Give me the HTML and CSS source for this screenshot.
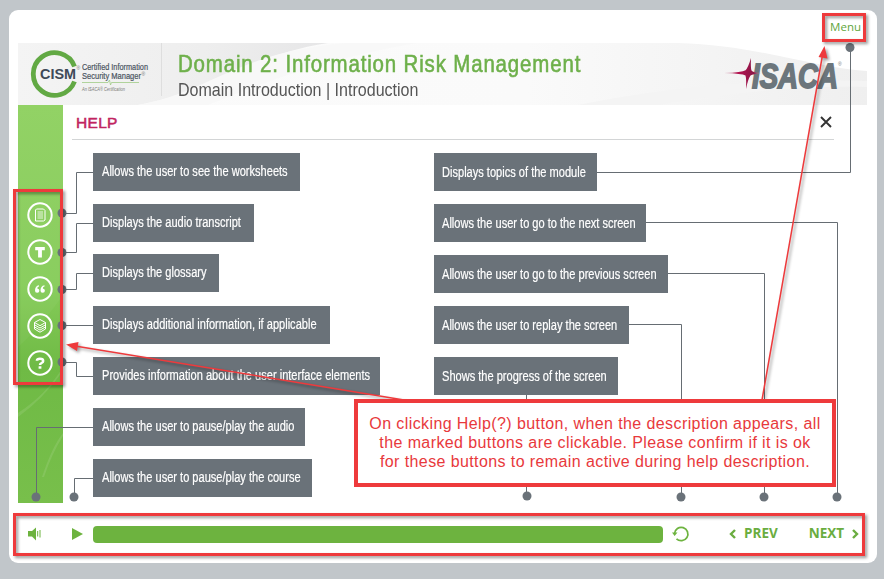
FILE: index.html
```html
<!DOCTYPE html>
<html lang="en">
<head>
<meta charset="utf-8">
<title>Domain 2: Information Risk Management</title>
<link rel="stylesheet" href="styles.css">
</head>
<body>
<main class="player">
  <nav class="topbar"><a class="menu">Menu</a></nav>

  <header class="banner">
    <svg class="swoosh" viewBox="0 0 849 62" preserveAspectRatio="none" aria-hidden="true">
      <defs>
        <linearGradient id="g1" x1="0" x2="1" y1="0" y2="0"><stop offset="0" stop-color="#f4f4f4"/><stop offset=".6" stop-color="#eeeeee"/><stop offset="1" stop-color="#e6e6e7"/></linearGradient>
        <linearGradient id="g3" x1="0" x2="1" y1="0" y2="0"><stop offset="0" stop-color="#fbfbfb"/><stop offset=".6" stop-color="#fafafa"/><stop offset="1" stop-color="#efefef"/></linearGradient>
      </defs>
      <rect width="849" height="62" fill="url(#g3)"/>
      <path d="M0 0H310C230 12 190 50 120 62H0Z" fill="url(#g1)"/>
      <path d="M120 62C190 50 220 8 330 0H400C300 16 220 50 190 62Z" fill="#f8f8f8"/>
      <path d="M660 0C740 2 800 26 849 28V0Z" fill="#fff"/>
      <path d="M560 62C640 46 740 34 849 38V44C770 42 700 52 640 62Z" fill="#f4f4f4"/>
    </svg>
    <svg class="cism" viewBox="0 0 130 50" role="img" aria-label="CISM">
      <path d="M44.500 17.500A21.300 21.300 0 1 0 44.500 32.500" fill="none" stroke="#62a944" stroke-width="4.800"/>
      <text x="10" y="29.500" class="cism-name" textLength="36" lengthAdjust="spacingAndGlyphs">CISM</text>
      <text x="46.500" y="21" class="reg">®</text>
      <text x="52" y="20.500" class="cism-line" textLength="66" lengthAdjust="spacingAndGlyphs">Certified Information</text>
      <text x="52" y="29.500" class="cism-line" textLength="59" lengthAdjust="spacingAndGlyphs">Security Manager</text>
      <text x="111.500" y="27" class="reg">®</text>
      <path d="M52 33.500H78L79.500 31L80.500 36L81.500 33.500H109" fill="none" stroke="#9fcb87" stroke-width=".8"/>
      <text x="52" y="42" class="cism-small" textLength="43" lengthAdjust="spacingAndGlyphs">An ISACA® Certification</text>
    </svg>
    <div class="titles">
      <h1>Domain 2: Information Risk Management</h1>
      <h2>Domain Introduction | Introduction</h2>
    </div>
    <svg class="isaca" viewBox="0 0 120 36" role="img" aria-label="ISACA">
      <defs><linearGradient id="star" x1="0" x2="1"><stop offset="0" stop-color="#c06a8c"/><stop offset=".4" stop-color="#b3124f"/><stop offset=".8" stop-color="#8c1647"/><stop offset="1" stop-color="#c9a0b2"/></linearGradient></defs>
      <text x="28" y="30.500" class="isaca-name" textLength="86" lengthAdjust="spacingAndGlyphs">ISACA</text>
      <text x="114" y="9" class="reg">®</text>
      <path d="M0 16Q18 15.500 21.500 13.200Q24 11 27 1Q26.500 11 27.500 13.500Q29 15.500 37 16Q29 17 26.500 18.500Q24 22 22 32Q22.500 22 21.500 18.500Q18 16.500 0 16Z" fill="url(#star)"/>
    </svg>
  </header>

  <div class="body">
    <aside class="sidebar">
      <svg class="shine" viewBox="0 0 45 398" preserveAspectRatio="none" aria-hidden="true">
        <path d="M0 242C22 222 38 200 45 190V0H0Z" fill="#fff" opacity=".04"/>
        <path d="M0 308Q28 290 45 262V266Q25 294 0 312Z" fill="#fff" opacity=".1"/>
        <path d="M24 372Q34 342 45 328V331Q34 348 26 372Z" fill="#fff" opacity=".1"/>
      </svg>
      <button><svg viewBox="0 0 26 26"><circle cx="13" cy="13" r="11.700"/><path d="M8.500 8V19H16.500L18 18V8.500L16.500 7H9.500Z"/><path d="M10.500 10H16M10.500 12H16M10.500 14H16M10.500 16H16" class="thin"/></svg></button>
      <button><svg viewBox="0 0 26 26"><circle cx="13" cy="13" r="11.700"/><path d="M8.200 8H17.800V11.300H14.900V18.500H11.100V11.300H8.200Z" class="solid"/></svg></button>
      <button><svg viewBox="0 0 26 26"><circle cx="13" cy="13" r="11.700"/><path d="M12 9.300Q8 10 8 14.500A2.200 2.200 0 1 0 10.300 12.400Q10.300 10.800 12 10.500ZM17.500 9.300Q13.500 10 13.500 14.500A2.200 2.200 0 1 0 15.800 12.400Q15.800 10.800 17.500 10.500Z" class="solid"/></svg></button>
      <button><svg viewBox="0 0 26 26"><circle cx="13" cy="13" r="11.700"/><path d="M13 6.500L18.500 9.500L13 12.700L7.500 9.500ZM7.500 11.800L13 15L18.500 11.800M7.500 13.900L13 17.100L18.500 13.900M7.500 16L13 19.200L18.500 16M7.500 9.500V16M18.500 9.500V16"/></svg></button>
      <button><svg viewBox="0 0 26 26"><circle cx="13" cy="13" r="11.700"/><path d="M9.900 10.800Q10 8.800 13 8.800Q16.200 8.800 16.200 11Q16.200 12.200 14.600 13Q13 13.800 13 15" class="mark"/><rect x="11.600" y="16.300" width="2.800" height="2.400" class="solid"/></svg></button>
    </aside>

    <section class="help">
      <div class="help-head">
        <h3>HELP</h3>
        <svg class="close" viewBox="0 0 12 12"><path d="M1 1L11 11M11 1L1 11"/></svg>
      </div>
      <div class="columns">
        <ul class="left">
          <li class="w1"><span>Allows the user to see the worksheets</span></li>
          <li class="w2"><span>Displays the audio transcript</span></li>
          <li class="w3"><span>Displays the glossary</span></li>
          <li class="w4"><span>Displays additional information, if applicable</span></li>
          <li class="w5"><span>Provides information about the user interface elements</span></li>
          <li class="w6"><span>Allows the user to pause/play the audio</span></li>
          <li class="w7"><span>Allows the user to pause/play the course</span></li>
        </ul>
        <ul class="right">
          <li class="w8"><span>Displays topics of the module</span></li>
          <li class="w9"><span>Allows the user to go to the next screen</span></li>
          <li class="w10"><span>Allows the user to go to the previous screen</span></li>
          <li class="w11"><span>Allows the user to replay the screen</span></li>
          <li class="w12"><span>Shows the progress of the screen</span></li>
        </ul>
      </div>
    </section>
  </div>

  <footer class="controls">
    <svg class="volume" viewBox="0 0 13 14"><path d="M0 4H4L8 .5V13.500L4 9.500H0Z"/><path d="M9.700 4V9.500M12 3V10.500" class="wave"/></svg>
    <svg class="play" viewBox="0 0 11 12"><path d="M0 0L11 6L0 12Z"/></svg>
    <div class="progress"></div>
    <svg class="replay" viewBox="0 0 17 16"><path d="M4.500 12.800A6.700 6.700 0 1 0 2.500 7.500" class="ring"/><path d="M0 6.500H5.500L2.600 10Z"/></svg>
    <a class="prev"><svg viewBox="0 0 7 10"><path d="M6 1L2 5L6 9"/></svg>PREV</a>
    <a class="next">NEXT<svg viewBox="0 0 7 10"><path d="M1 1L5 5L1 9"/></svg></a>
  </footer>
</main>

<svg class="connectors" viewBox="0 0 884 579" aria-hidden="true">
  <g class="wires">
    <path d="M62 213.500H76.500V172.500H93M62 252.500H76.500V223.500H93M62 289.500H76.500V273.500H93M62 325.500H93M62 362.500H76.500V376.500H93M36.500 497V427.500H93M74.500 497V478.500H93"/>
    <path d="M597 172.500H850.500V48M646 222.500H837.500V497M668 273.500H764.500V497M629 324.500H681.500V497M526.500 395V496"/>
  </g>
  <g class="dots">
    <circle cx="62" cy="213" r="4.500"/><circle cx="62" cy="252.500" r="4.500"/><circle cx="62" cy="289.500" r="4.500"/><circle cx="62" cy="325.500" r="4.500"/><circle cx="62" cy="362" r="4.500"/>
    <circle cx="36" cy="497" r="4.500"/><circle cx="74" cy="497" r="4.500"/><circle cx="850" cy="47.500" r="4.500"/><circle cx="837" cy="497" r="4.500"/><circle cx="764" cy="497" r="4.500"/><circle cx="681" cy="497" r="4.500"/><circle cx="527" cy="496" r="4.500"/>
  </g>
</svg>
<svg class="marks" viewBox="0 0 884 579" aria-hidden="true">
  <g class="frames">
    <rect x="823.500" y="14.500" width="41" height="26"/>
    <rect x="14.500" y="190.500" width="47" height="193"/>
    <rect x="14.500" y="514.500" width="849" height="40"/>
  </g>
  <path d="M762 400L822.500 55M404 400L75 346" class="shaft"/>
  <path d="M824.500 46L827.500 58.500L818.500 57ZM66 344.500L78.500 342L77 351Z" class="head"/>
</svg>
<div class="note">
  <p>On clicking Help(?) button, when the description appears, all</p>
  <p>the marked buttons are clickable. Please confirm if it is ok</p>
  <p>for these buttons to remain active during help description.</p>
</div>
</body>
</html>
```
FILE: styles.css
```css
* { box-sizing: border-box; margin: 0; padding: 0; }
body {
  width: 884px; height: 579px; overflow: hidden; position: relative;
  padding: 10px 7px 16px 9px;
  background: #c1c6ca;
  font-family: "Liberation Sans", sans-serif;
}
svg { display: block; overflow: visible; }
.player {
  height: 553px; padding: 0 10px 0 9px;
  display: flex; flex-direction: column;
  background: #fff; border-radius: 9px;
}
.topbar { height: 33px; display: flex; justify-content: flex-end; padding: 8px 6px 0 0; }
.menu { font: 11.500px/18px "Open Sans", sans-serif; color: #5fa53c; }

.banner { height: 62px; display: flex; position: relative; }
.swoosh { position: absolute; left: 0; top: 0; width: 849px; height: 62px; }
.cism { position: relative; width: 130px; height: 50px; margin: 6px 0 0 12px; }
.cism-name { font: bold 14.500px "Liberation Sans", sans-serif; fill: #3f4a58; }
.cism-line { font: 9px "Liberation Sans", sans-serif; fill: #4a545f; stroke: #4a545f; stroke-width: .2; }
.cism-small { font: italic 4.500px "Liberation Sans", sans-serif; fill: #777; }
.reg { font: 5px "Liberation Sans", sans-serif; fill: #777; }
.titles { position: relative; width: 430px; margin-left: 1px; padding: 8px 0 0 16px; border-left: 1px solid #dedede; height: 53px; }
/* condensed lettering */
h1, h2, li span { display: block; width: max-content; white-space: nowrap; font-weight: normal; transform-origin: 0 50%; }
h1 { font-size: 24px; line-height: 26px; letter-spacing: 1px; color: #6eb04b; -webkit-text-stroke: .6px #6eb04b; transform: scaleX(.852); }
h2 { font-size: 18.500px; line-height: 26px; color: #555; transform: scaleX(.867); }
.isaca { position: relative; width: 120px; height: 36px; margin: 14px 0 0 133px; }
.isaca-name { font: italic bold 35px "Liberation Sans", sans-serif; fill: #6c767c; stroke: #6c767c; stroke-width: 1.800; }

.body { height: 398px; display: flex; }
.sidebar {
  width: 45px; padding: 97px 1px 0 0; position: relative;
  display: flex; flex-direction: column; align-items: center; gap: 11px;
  background: linear-gradient(#8ed15f 0, #86cc59 45%, #6fba45 66%, #78bf4b 100%);
}
.shine { position: absolute; inset: 0; width: 45px; height: 398px; }
.sidebar button { position: relative; width: 26px; height: 26px; border: 0; background: none; }
.sidebar button svg { width: 26px; height: 26px; fill: none; stroke: #fff; stroke-width: 1; }
.sidebar circle { stroke-width: 2; }
.sidebar .thin { stroke-width: .8; }
.sidebar .solid { fill: #fff; stroke: none; }
.sidebar .mark { stroke-width: 2.500; }

.help { flex: 1; padding-left: 9px; }
.help-head {
  width: 762px; height: 35px; padding: 0 2px 0 4px;
  display: flex; justify-content: space-between;
  border-bottom: 1px solid #d3d5d6;
}
h3 { font: 500 15.500px/35px "Liberation Sans", sans-serif; letter-spacing: .3px; color: #c1245f; -webkit-text-stroke: .5px #c1245f; }
.close { width: 12px; height: 12px; margin-top: 11px; stroke: #333; stroke-width: 1.900; }
.columns { display: grid; grid-template-columns: 341px 1fr; padding: 13px 0 0 21px; }
ul { list-style: none; display: flex; flex-direction: column; align-items: flex-start; gap: 13px; }
li {
  height: 38px; padding-left: 9px;
  font-size: 14px; line-height: 37px; color: #fff; background: #6a7279;
}
li span { transform: scaleX(.79); -webkit-text-stroke: .2px #fff; }
.right li { padding-left: 8px; line-height: 39px; }
.w1 { width: 207px; } .w2 { width: 161px; }
.w3 { width: 126px; margin: -1px 0 1px; }
.w4 { width: 237px; } .w5 { width: 287px; } .w6 { width: 212px; } .w7 { width: 219px; }
.w8 { width: 163px; } .w9 { width: 212px; } .w10 { width: 234px; } .w11 { width: 195px; } .w12 { width: 184px; }

.controls { height: 60px; padding: 2px 0 0 10px; display: flex; align-items: center; fill: #6db33f; }
.volume { width: 13px; height: 14px; }
.wave { stroke: #6db33f; stroke-width: 1; }
.play { width: 11px; height: 12px; margin-left: 31px; }
.progress { width: 570px; height: 17px; margin-left: 10px; border-radius: 4px; background: #6db33f; }
.replay { width: 17px; height: 16px; margin-left: 9px; }
.ring { fill: none; stroke: #6db33f; stroke-width: 1.700; }
.prev, .next { display: flex; align-items: center; font: bold 13.500px/18px "Open Sans", sans-serif; color: #6aad40; position: relative; top: -1px; }
.prev { margin-left: 40px; gap: 8px; }
.next { margin-left: 31px; gap: 8px; }
.prev svg, .next svg { width: 7px; height: 10px; margin-top: 2px; fill: none; stroke: #6aad40; stroke-width: 2.400; }

.connectors, .marks { position: absolute; left: 0; top: 0; width: 884px; height: 579px; pointer-events: none; }
.wires { fill: none; stroke: #666d73; stroke-width: 1; }
.dots { fill: #6a7279; }
.marks { filter: drop-shadow(2px 2px 1.500px rgba(0, 0, 0, .4)); }
.frames { fill: none; stroke: #ee3a3c; stroke-width: 3; }
.shaft { fill: none; stroke: #ee3a3c; stroke-width: 1.500; }
.head { fill: #ee3a3c; }
.note {
  position: absolute; left: 354px; top: 399px; width: 482px; height: 88px;
  padding-top: 11px; border: 4px solid #ee3a3c; background: #fff; text-align: center;
  font: 16px/19px "Liberation Sans", sans-serif; color: #e8393c; letter-spacing: .4px;
}
.note p { white-space: nowrap; }
```
